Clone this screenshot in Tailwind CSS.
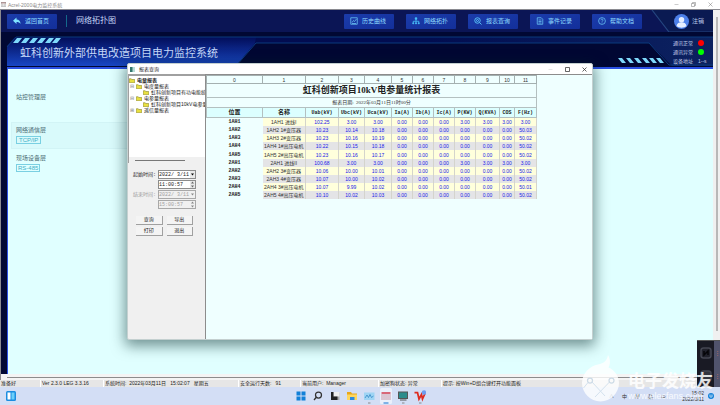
<!DOCTYPE html>
<html lang="zh-CN">
<head>
    <meta charset="UTF-8">
    <meta name="viewport" content="width=device-width, initial-scale=1.0">
    <title>Acrel-2000电力监控系统</title>
    <script src="https://cdn.jsdelivr.net/npm/@tailwindcss/browser@4"></script>
</head>
<body class="relative flex flex-col min-h-screen overflow-hidden bg-white font-['Liberation_Sans','Noto_Sans_CJK_SC',sans-serif] text-[5px] leading-[6px] text-[#333]">

    <!-- Window title -->
    <header class="flex items-center h-[9px] px-px text-[#888]">
        <svg class="w-[5px] h-[5px] mr-[2px]" viewBox="0 0 10 10"><path fill="#c8a0a0" d="M0 0h10v3H0z"/><path fill="none" stroke="#888" d="M.5.5h9v9h-9zM3.500 3v6M6.500 3v6"/></svg>
        <span class="flex-1">Acrel-2000电力监控系统</span>
        <div class="flex gap-3 pr-[6px]">
            <svg class="w-[5px] h-[5px]" viewBox="0 0 10 10" stroke="#999" fill="none"><path d="M1 5h8"/></svg>
            <svg class="w-[5px] h-[5px]" viewBox="0 0 10 10" stroke="#777" fill="none"><path d="M1 3h6v6H1zM3 3V1h6v6H7"/></svg>
            <svg class="w-[5px] h-[5px]" viewBox="0 0 10 10" stroke="#777" fill="none"><path d="M1 1l8 8M9 1L1 9"/></svg>
        </div>
    </header>

    <div class="flex flex-1 border-t border-l border-[#8a8a90]">
        <div class="flex flex-col flex-1 bg-[#010833]">
            <!-- Nav -->
            <nav class="grid bg-[#0b1555]">
                <svg class="col-start-1 row-start-1 justify-self-end w-16 h-[22px]" viewBox="0 0 64 22" fill="none"><path d="M20 22L3 0h61v22z" fill="#0a1a52"/><path d="M3 0l17 22h44" stroke="#24457f" stroke-width="1.200"/></svg>
                <div class="col-start-1 row-start-1 flex items-center h-[22px] pl-[6px] pr-[9px] text-[6px] leading-[8px] text-[#8fdcff]">
                    <button class="flex items-center gap-1 w-[50px] h-[15px] pl-[6px] rounded-[1px] bg-linear-to-br from-[#1b3cab] to-[#132f9a]">
                        <svg class="w-2 h-2" viewBox="0 0 16 16" fill="#7fe3ff"><path d="M7 1v4c5 0 8 3 8 9-2-3-4-4-8-4v4L0 7.500z"/></svg>返回首页
                    </button>
                    <span class="w-px h-3 ml-[9px] mr-[9px] bg-[#14688c]"></span>
                    <h2 class="flex-1 text-[8px] text-[#c4d6f5]">网络拓扑图</h2>
                    <div class="flex gap-3 mr-[32px]">
                        <button class="flex items-center gap-1 w-[50px] h-[15px] pl-[6px] rounded-[1px] bg-linear-to-br from-[#1b3cab] to-[#132f9a]">
                            <svg class="w-2 h-2" viewBox="0 0 16 16" fill="none" stroke="#6cc8f5" stroke-width="1.500"><path d="M1.500 1.500h13v13h-13zM4 11l3-4 2 2 4-5M4 13h8"/></svg>历史曲线
                        </button>
                        <button class="flex items-center gap-1 w-[50px] h-[15px] pl-[6px] rounded-[1px] bg-linear-to-br from-[#1b3cab] to-[#132f9a]">
                            <svg class="w-2 h-2" viewBox="0 0 16 16" fill="#4cc9ff" stroke="#4cc9ff" stroke-width="1.500"><path d="M6.500 1.500h3v3h-3zM1.500 11.500h2v2h-2zM7 11.500h2v2H7zM12.500 11.500h2v2h-2z"/><path fill="none" d="M8 4v7M2.500 11V8.500h11V11"/></svg>网络拓扑
                        </button>
                        <button class="flex items-center gap-1 w-[50px] h-[15px] pl-[6px] rounded-[1px] bg-linear-to-br from-[#1b3cab] to-[#132f9a]">
                            <svg class="w-2 h-2" viewBox="0 0 16 16" fill="none" stroke="#5cc8fa" stroke-width="1.800"><circle cx="7" cy="7" r="5.500"/><circle cx="7" cy="7" r="2"/><path d="M11 11l4 4"/></svg>报表查询
                        </button>
                        <button class="flex items-center gap-1 w-[50px] h-[15px] pl-[6px] rounded-[1px] bg-linear-to-br from-[#1b3cab] to-[#132f9a]">
                            <svg class="w-2 h-2" viewBox="0 0 16 16" fill="none" stroke="#6cc8f5" stroke-width="1.500"><path d="M2.500 1.500h8l3 3v10h-11zM5 6h6M5 9h6M5 12h6"/></svg>事件记录
                        </button>
                        <button class="flex items-center gap-1 w-[50px] h-[15px] pl-[6px] rounded-[1px] bg-linear-to-br from-[#1b3cab] to-[#132f9a]">
                            <svg class="w-2 h-2" viewBox="0 0 16 16" fill="none" stroke="#6cc8f5" stroke-width="1.500"><circle cx="8" cy="8" r="6.800"/><path d="M5.800 6.500c0-3 4.400-3 4.400-.3 0 1.600-2.200 1.600-2.200 3.300M8 11v1.500"/></svg>帮助文档
                        </button>
                    </div>
                    <a href="#" class="flex items-center gap-[3px] text-[#b8c8e8]">
                        <svg class="w-[15px] h-[15px]" viewBox="0 0 30 30"><circle cx="15" cy="15" r="15" fill="#4d80e8"/><circle cx="15" cy="11.500" r="5.500" fill="#e6efff"/><path d="M5 24c1-6 5-7.500 10-7.500S24 18 25 24c-5 4.500-15 4.500-20 0z" fill="#e6efff"/></svg>注销
                    </a>
                </div>
            </nav>

            <!-- Banner -->
            <div class="grid pt-1">
                <svg class="col-start-1 row-start-1 w-full h-8" viewBox="0 0 712 32" preserveAspectRatio="none" fill="none">
                    <defs>
                        <linearGradient id="left" x1="0" y1="0" x2="0" y2="1"><stop offset="0" stop-color="#020d58"/><stop offset="1" stop-color="#1846c4"/></linearGradient>
                        <linearGradient id="right" x1="0" y1="0" x2="1" y2="0"><stop offset="0" stop-color="#020b50"/><stop offset=".6" stop-color="#020d50"/><stop offset="1" stop-color="#0c2260"/></linearGradient>
                    </defs>
                    <path d="M6 10L14 1h698v29H6z" fill="url(#right)"/>
                    <path d="M6 10L14 1h241l-1 6-19 23H6z" fill="url(#left)"/>
                    <path d="M255 7h393l23 23H235z" fill="#010733"/>
                    <path d="M648 7l20 22h44" stroke="#0b3a7c"/>
                    <path d="M235 30l20-23h393M6 11l9-10h697" stroke="#0b3a7c"/>
                    <path fill="#7ed9fb" d="M12 7l4-5h5l-4 5zM20 7l4-5h5l-4 5zM28 7l4-5h5l-4 5zM36 7l4-5h5l-4 5zM44 7l4-5h5l-4 5zM51 7l4-5h5l-4 5z"/>
                    <path fill="#7ed9fb" d="M617 22h4l4 5h-4zM625 22h4l4 5h-4zM633 22h4l4 5h-4zM641 22h4l4 5h-4zM648 22h4l4 5h-4zM655 22h4l4 5h-4z"/>
                </svg>
                <div class="col-start-1 row-start-1 flex items-center justify-between h-8 pl-[19px] pr-[7px]">
                    <h1 class="pt-[2px] text-[11px] leading-[14px] text-[#c6d9fa]">虹科创新外部供电改造项目电力监控系统</h1>
                    <dl class="grid grid-cols-[24px_8px] gap-x-px gap-y-[3px] text-[#c0cce8]">
                        <dt>通讯正常</dt><dd class="w-[6px] h-[6px] rounded-full bg-[#ff0000]"></dd>
                        <dt>通讯异常</dt><dd class="w-[6px] h-[6px] rounded-full bg-[#00ff00]"></dd>
                        <dt>设备地址</dt><dd class="whitespace-nowrap">1--s</dd>
                    </dl>
                </div>
            </div>

            <!-- Topology canvas -->
            <main class="flex-1 ml-[6px] -mt-px border-t-2 border-l border-[#2a50e4] bg-[#e0ffff] pl-[3px] text-[6px] leading-[8px] text-[#4c6c74]">
                <section class="h-[53px] pl-[5px] pt-6">站控管理层</section>
                <section class="w-1/2 h-[27px] pl-1 pt-[3px] border border-[#d2f4f6] bg-[#d9fafb]">
                    <p>网络通信层</p>
                    <span class="inline-block px-[2px] mt-[2px] border border-[#7ad0e2] text-[#3fb0c8] leading-[6px]">TCP/IP</span>
                </section>
                <section class="pl-[5px] pt-[5px]">
                    <p>现场设备层</p>
                    <span class="inline-block px-px mt-[2px] border border-[#7ad0e2] text-[#3fb0c8] leading-[6px]">RS-485</span>
                </section>
            </main>
            <div class="flex items-center h-[6px] pl-[6px] bg-[#f4f4f4]"><span class="w-full h-px bg-[#8c8c8c]"></span></div>
        </div>
        <div class="flex justify-center w-[7px] py-[7px] bg-[#f0f0f0]"><span class="w-[2px] h-[314px] bg-[#b8b8b8]"></span></div>
    </div>

    <!-- Status bar -->
    <footer class="grid grid-cols-[40px_63px_135px_62px_78px_63px_1fr] h-[7px] bg-[#f0f0f0] text-[#222] whitespace-nowrap">
        <span class="pl-px bg-[#e6e6e6]">准备好</span>
        <span class="pl-px border-l border-white bg-[#e6e6e6]">Ver 2.3.0 LEG 3.3.16</span>
        <span class="pl-px border-l border-white bg-[#e6e6e6]">系统时间: &nbsp;2022年03月11日 &nbsp; 15:02:07 &nbsp; 星期五</span>
        <span class="pl-px border-l border-white bg-[#e6e6e6]">安全运行天数: &nbsp; 91</span>
        <span class="pl-px border-l border-white bg-[#e6e6e6]">当前用户: &nbsp;Manager</span>
        <span class="pl-px border-l border-white bg-[#e6e6e6]">加密狗状态: 异常</span>
        <span class="pl-px border-l border-white bg-[#e6e6e6]">提示: 按Win+D组合键打开功能面板</span>
    </footer>

    <!-- Taskbar -->
    <div class="grid grid-cols-3 items-center h-[18px] px-[6px] bg-[#d3def5]">
        <svg class="w-[10px] h-[10px]" viewBox="0 0 20 20"><rect width="20" height="20" rx="3" fill="#1b8de0"/><rect x="3" y="3" width="6" height="14" fill="#fff"/><rect x="11" y="3" width="6" height="14" fill="#6cd0fa"/></svg>
        <div class="flex justify-center gap-[5px]">
            <svg class="w-3 h-4" viewBox="0 0 24 32"><path fill="#1180d8" d="M3 7h8v8H3zM13 7h8v8h-8zM3 17h8v8H3zM13 17h8v8h-8z"/></svg>
            <svg class="w-3 h-4" viewBox="0 0 24 32" fill="none" stroke="#333" stroke-width="2.500"><circle cx="13" cy="14" r="6"/><path d="M9 18l-5 6"/></svg>
            <svg class="w-3 h-4" viewBox="0 0 24 32"><path fill="#aaa" d="M9 9h12v15H9z"/><path fill="#eee" d="M9 8h12v9H9z"/><path fill="#222" d="M4 8h5v9h8v7H4z"/></svg>
            <svg class="w-3 h-4" viewBox="0 0 24 32"><path fill="#e8a71c" d="M2 8h8l2 3h10v13H2z"/><path fill="#ffd75e" d="M2 13h20v11H2z"/><path fill="#2c8be0" d="M8 18h9v6H8z"/></svg>
            <svg class="w-3 h-4" viewBox="0 0 24 32"><rect x="2" y="9" width="21" height="15" fill="#9ed4f4"/><path d="M4 20l4-6 3 5 3-6 3 6 4-3" fill="none" stroke="#2f86c4" stroke-width="1.500"/><path fill="#888" d="M10 29h5v2h-5z"/></svg>
            <svg class="w-3 h-4" viewBox="0 0 24 32"><rect width="24" height="32" rx="3" fill="#eaf0fb"/><path fill="#d86878" d="M3 8h18v4H3z"/><path fill="none" stroke="#c08090" stroke-width="1.500" d="M4 12v12M8 12v12M12 12v12M16 12v12M20 12v12"/><path fill="#1474d0" d="M7 29h10v2H7z"/></svg>
            <svg class="w-3 h-4" viewBox="0 0 24 32"><path fill="#555" d="M2 7h20v15H2zM6 23h13v2H6z"/><path fill="#2c8c8c" d="M4 9h16v11H4z"/><path fill="#888" d="M10 29h5v2h-5z"/></svg>
            <svg class="w-3 h-4" viewBox="0 0 24 32"><path fill="none" stroke="#dd2c20" stroke-width="3.500" d="M1 9h6l3 13 5-9 2 9 5-11"/><circle cx="20" cy="9" r="4.500" fill="#6c9cf0"/><path fill="#888" d="M10 29h5v2h-5z"/></svg>
        </div>
        <div class="flex items-center justify-end gap-2 text-[#333]">
            <span>∧</span><span>中</span><span>拼</span><span>品</span><span>▭</span>
            <time class="pl-2 text-right leading-[6px]">15:02<br>2022/3/11</time>
            <svg class="w-[6px] h-[6px] -ml-1" viewBox="0 0 12 12"><circle cx="6" cy="6" r="6" fill="#1280d8"/><path d="M4 3v4c0 2 4 2 4 0V3" fill="none" stroke="#fff" stroke-width="1.500"/></svg>
        </div>
    </div>

    <!-- Report dialog -->
    <div role="dialog" aria-label="报表查询" class="absolute left-[127px] right-[127px] top-[63px] h-[277px] flex flex-col rounded-[2px] border border-[#c4d0d0] bg-[#f0f0f0] shadow-[0_4px_14px_2px_rgba(0,40,40,0.5)]">
        <div class="flex items-center h-[10px] pl-[2px] pr-[5px] rounded-t-[2px] bg-white text-[#222]">
            <svg class="w-[5px] h-[5px] mr-1" viewBox="0 0 10 10"><path fill="#b8dcd8" d="M0 0h10v10H0z"/><path fill="#33776c" d="M0 0h5v10H0z"/></svg>
            <span class="flex-1">报表查询</span>
            <div class="flex gap-3">
                <button aria-label="最小化"><svg class="w-[5px] h-[5px]" viewBox="0 0 10 10" stroke="#ccc"><path d="M1 5h8"/></svg></button>
                <button aria-label="最大化"><svg class="w-[5px] h-[5px]" viewBox="0 0 10 10" stroke="#333" stroke-width="1.500" fill="none"><path d="M1 1h8v8H1z"/></svg></button>
                <button aria-label="关闭"><svg class="w-[5px] h-[5px]" viewBox="0 0 10 10" stroke="#333" stroke-width="1.500"><path d="M1 1l8 8M9 1L1 9"/></svg></button>
            </div>
        </div>
        <div class="flex flex-1 min-h-0">
            <aside class="w-[77px] text-[#222]">
                <div class="flex flex-col h-[89px] border-t-2 border-l border-[#a0a0a0] bg-white overflow-hidden">
                    <ul id="tree" class="flex-1 pt-px whitespace-nowrap overflow-hidden"></ul>
                    <div class="flex items-center h-[6px] pl-[6px] bg-[#f0f0f0]"><span class="w-[50px] h-px bg-[#777]"></span></div>
                </div>
                <form class="pt-[7px] font-['Liberation_Mono','Noto_Sans_CJK_SC',monospace]" onsubmit="return false">
                    <div class="grid grid-cols-[25px_38px] gap-y-px pl-[5px]">
                        <label for="startDate" class="pt-[2px] whitespace-nowrap">起始时间:</label>
                        <div class="flex h-[9px] border border-[#8c8c8c] bg-white">
                            <input id="startDate" value="2022/ 3/11" class="flex-1 min-w-0">
                            <button type="button" aria-label="选择起始日期" class="flex items-center justify-center w-[5px] bg-[#e8e8e8]"><svg class="w-[3px] h-[3px]" viewBox="0 0 6 6"><path d="M0 1h6L3 5z"/></svg></button>
                        </div>
                        <label for="startTime" class="sr-only">起始时刻</label>
                        <div class="col-start-2 flex h-[9px] border border-[#8c8c8c] bg-white">
                            <input id="startTime" value="11:00:57" class="flex-1 min-w-0">
                            <button type="button" aria-label="调整起始时刻" class="flex items-center justify-center w-[5px] bg-[#e8e8e8]"><svg class="w-[3px] h-[7px]" viewBox="0 0 6 14" fill="#666"><path d="M0 5h6L3 1zM0 9h6l-3 4z"/></svg></button>
                        </div>
                    </div>
                    <div class="grid grid-cols-[25px_38px] gap-y-px pl-[5px] pt-px text-[#a0a0a0]">
                        <label for="endDate" class="pt-[2px] whitespace-nowrap">结束时间:</label>
                        <div class="flex h-[9px] border border-[#a8a8a8] bg-[#f0f0f0]">
                            <input id="endDate" value="2022/ 3/11" disabled class="flex-1 min-w-0">
                            <button type="button" disabled aria-label="选择结束日期" class="flex items-center justify-center w-[5px]"><svg class="w-[3px] h-[3px]" viewBox="0 0 6 6" fill="#888"><path d="M0 1h6L3 5z"/></svg></button>
                        </div>
                        <label for="endTime" class="sr-only">结束时刻</label>
                        <div class="col-start-2 flex h-[9px] border border-[#a8a8a8] bg-[#f0f0f0]">
                            <input id="endTime" value="15:00:57" disabled class="flex-1 min-w-0">
                            <button type="button" disabled aria-label="调整结束时刻" class="flex items-center justify-center w-[5px]"><svg class="w-[3px] h-[7px]" viewBox="0 0 6 14" fill="#888"><path d="M0 5h6L3 1zM0 9h6l-3 4z"/></svg></button>
                        </div>
                    </div>
                    <div class="grid grid-cols-2 gap-x-1 gap-y-[2px] pl-2 pr-3 pt-[7px]">
                        <button class="h-[9px] border-r border-b border-[#a0a0a0] bg-[#f4f4f4]">查询</button>
                        <button class="h-[9px] border-r border-b border-[#a0a0a0] bg-[#f4f4f4]">导出</button>
                        <button class="h-[9px] border-r border-b border-[#a0a0a0] bg-[#f4f4f4]">打印</button>
                        <button class="h-[9px] border-r border-b border-[#a0a0a0] bg-[#f4f4f4]">退出</button>
                    </div>
                </form>
            </aside>
            <div class="flex-1 border-t border-l border-[#8c8c8c] bg-[#efffff]">
                <table class="table-fixed w-[330px] h-[124px] border-collapse text-center whitespace-nowrap">
                    <colgroup>
                        <col class="w-[56px]"><col class="w-[43px]"><col class="w-[33px]"><col class="w-[26px]"><col class="w-[27px]"><col class="w-[21px]">
                        <col class="w-[21px]"><col class="w-[21px]"><col class="w-[21px]"><col class="w-[24px]"><col class="w-[15px]"><col class="w-[22px]">
                    </colgroup>
                    <thead>
                        <tr id="index" class="h-2"></tr>
                        <tr class="h-[14px]"><th colspan="12" class="p-0 border border-[#b4c0c0] font-['Liberation_Serif','Noto_Sans_CJK_SC',serif] text-[9px] leading-[11px] font-bold text-[#222]">虹科创新项目10kV电参量统计报表</th></tr>
                        <tr class="h-[10px]"><td colspan="12" class="p-0 border border-[#b4c0c0] font-['Liberation_Serif','Noto_Sans_CJK_SC',serif]">报表日期: &nbsp;2022年03月11日11时00分</td></tr>
                        <tr id="heads" class="h-[10px] bg-[#dcffff]"></tr>
                    </thead>
                    <tbody id="rows"></tbody>
                </table>
            </div>
        </div>
    </div>

    <!-- Side widget -->
    <div class="absolute right-0 bottom-[18px] flex w-[23px] h-[47px] bg-[#191a24] border-t border-[#555]">
        <div class="flex-1 grid grid-rows-2 place-items-center">
            <svg class="w-3 h-3" viewBox="0 0 24 24"><rect x="2" y="2" width="20" height="20" rx="5" fill="#20212b" stroke="#444652" stroke-width="3"/><path d="M8 8v8l8-8v8" fill="none" stroke="#050508" stroke-width="3"/></svg>
            <svg class="w-3 h-3" viewBox="0 0 24 24"><rect x="2" y="2" width="20" height="20" rx="5" fill="#33343e" stroke="#444652" stroke-width="3"/></svg>
        </div>
        <div class="w-[6px] grid grid-rows-2 place-items-center bg-[#50536c] text-[#d07060]"><span>⋮</span><span>⋮</span></div>
    </div>

    <!-- Watermark -->
    <div class="absolute right-[7px] bottom-0 flex items-end gap-2 text-white/85">
        <svg class="w-[39px] h-12 mb-[2px]" viewBox="0 0 78 96" fill="none">
            <path fill="#fff" fill-opacity=".8" d="M2 56c0-20 16-34 32-37 12-2 18-8 20-19 6 10 4 20 1 25 12 5 21 17 21 31 0 20-17 37-37 37S2 76 2 56z"/>
            <path stroke="#d4e2ee" stroke-width="2" d="M14 55L5 66M22 54l26 28M57 54L28 84"/>
            <circle cx="18" cy="51" r="5" stroke="#cddbe6" stroke-width="2.500"/><circle cx="61" cy="51" r="5" stroke="#cddbe6" stroke-width="2.500"/>
        </svg>
        <div class="pb-1">
            <p class="text-[17px] leading-[19px] font-bold">电子发烧友</p>
            <p class="text-[9px] leading-[10px]">www.elecfans.com</p>
        </div>
    </div>

    <script>
        const folder = '<svg class="shrink-0 w-[6px] h-[5px]" viewBox="0 0 12 10"><path d="M.5 1.500h4l1 1.500h6v6.500H.5z" fill="#e8e040" stroke="#77701c"/></svg>';
        const tree = [
            ['', '电量报表', 'font-bold'],
            ['⊟', '电度量报表', 'pl-px'],
            ['', '虹科创新项目有功电能统', 'pl-[14px]'],
            ['⊟', '电参量报表', 'pl-px'],
            ['', '虹科创新项目10kV电参量', 'pl-[14px]'],
            ['⊞', '遥信量报表', 'pl-px']
        ];
        document.getElementById('tree').innerHTML = tree.map(([sign, text, css]) =>
            `<li class="flex items-center gap-[2px] h-[6px] ${css}">${sign ? `<span class="w-1 text-[#888]">${sign}</span>` : ''}${folder}${text}</li>`
        ).join('');

        const heads = ['位置', '名称', 'Uab(kV)', 'Ubc(kV)', 'Uca(kV)', 'Ia(A)', 'Ib(A)', 'Ic(A)', 'P(KW)', 'Q(KVA)', 'COS', 'F(Hz)'];
        document.getElementById('index').innerHTML = heads.map((h, i) =>
            `<td class="p-0 border border-[#a4b0b0]">${i}</td>`).join('');
        document.getElementById('heads').innerHTML = heads.map((h, i) =>
            `<th class="p-0 border border-[#b4c0c0] font-['Liberation_Mono','Noto_Sans_CJK_SC',monospace] font-bold text-[#222] ${i < 2 ? 'text-[6px]' : ''}">${h}</th>`).join('');

        const rows = [
            ['1AH1', '1AH1 进线I', '102.25', '3.00', '3.00', '3.00', '3.00'],
            ['1AH2', '1AH2 1#变压器', '10.23', '10.14', '10.18', '0.00', '50.03'],
            ['1AH3', '1AH3 2#变压器', '10.23', '10.16', '10.19', '0.00', '50.02'],
            ['1AH4', '1AH4 1#高压电机', '10.22', '10.15', '10.18', '0.00', '50.02'],
            ['1AH5', '1AH5 2#高压电机', '10.23', '10.16', '10.17', '0.00', '50.02'],
            ['2AH1', '2AH1 进线II', '100.68', '3.00', '3.00', '3.00', '3.00'],
            ['2AH2', '2AH2 3#变压器', '10.06', '10.00', '10.01', '0.00', '50.02'],
            ['2AH3', '2AH3 4#变压器', '10.07', '10.00', '10.02', '0.00', '50.02'],
            ['2AH4', '2AH4 3#高压电机', '10.07', '9.99', '10.02', '0.00', '50.01'],
            ['2AH5', '2AH5 4#高压电机', '10.10', '10.02', '10.03', '0.00', '50.02']
        ];
        document.getElementById('rows').innerHTML = rows.map(([pos, name, uab, ubc, uca, pq, f], i) => {
            const bg = i % 2 ? 'bg-[#e4e4e6]' : 'bg-[#ffffdc]';
            const values = [uab, ubc, uca, '0.00', '0.00', '0.00', pq, pq, pq, f];
            return `<tr><th class="p-0 font-['Liberation_Mono',monospace] font-bold text-[#222]">${pos}</th>
                <td class="p-0 ${bg} border-r border-[#d4d4cc]">${name}</td>` +
                values.map(v => `<td class="p-0 ${bg} border-r border-[#d4d4cc] text-[#2020e8]">${v}</td>`).join('') + '</tr>';
        }).join('');
    </script>
</body>
</html>
